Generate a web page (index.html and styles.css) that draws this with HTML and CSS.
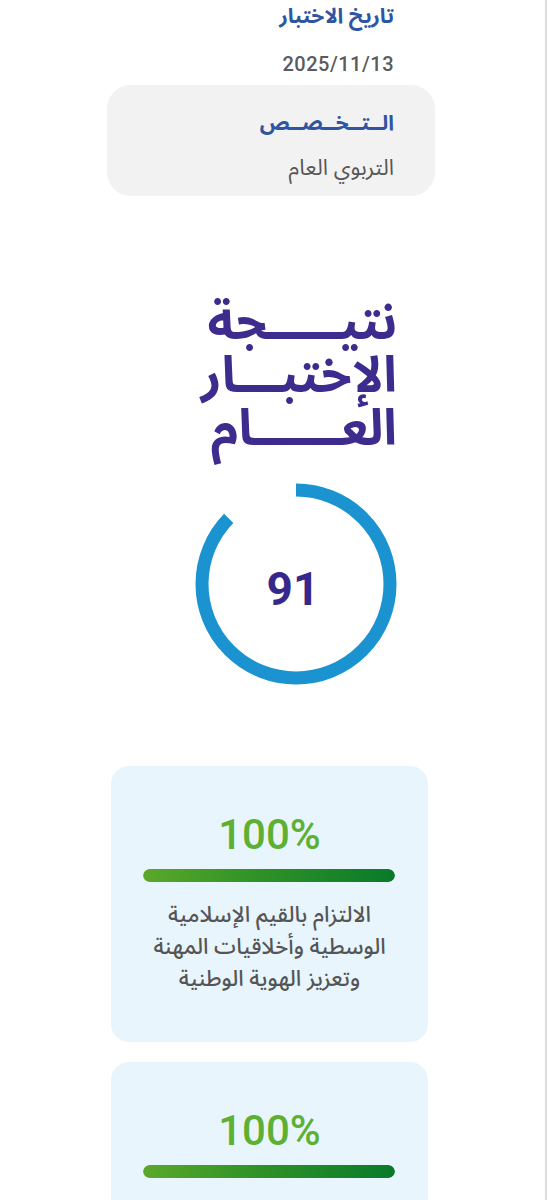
FILE: index.html
```html
<!DOCTYPE html>
<html lang="ar" dir="rtl">
  <head>
    <meta charset="UTF-8" />
    <meta name="viewport" content="width=device-width, initial-scale=1.0" />
    <title>نتيجة الإختبار</title>
    <link rel="stylesheet" href="styles.css">
  </head>
  <body>
    <div class="page">
      <div class="content">
        <div class="info">
          <div class="label">تاريخ الاختبار</div>
          <div class="date">2025/11/13</div>
        </div>

        <div class="specialty">
          <div class="label">الــتــخــصــص</div>
          <div class="value">التربوي العام</div>
        </div>

        <h1 class="title">
          <span>نتيـــــجة</span>
          <span>الإختبـــار</span>
          <span>العــــــام</span>
        </h1>

        <div class="score">
          <svg width="204" height="204" viewBox="0 0 204 204">
            <circle cx="102" cy="102" r="94" fill="none" stroke="#1b93d0" stroke-width="13"
              pathLength="100" stroke-dasharray="87.3 100" transform="rotate(-90 102 102)" />
          </svg>
          <div class="score-number">91</div>
        </div>

        <div class="card">
          <div class="percent">100%</div>
          <div class="bar"><div class="bar-fill" style="width: 100%"></div></div>
          <p class="card-text">الالتزام بالقيم الإسلامية<br />الوسطية وأخلاقيات المهنة<br />وتعزيز الهوية الوطنية</p>
        </div>

        <div class="card">
          <div class="percent">100%</div>
          <div class="bar"><div class="bar-fill" style="width: 100%"></div></div>
          <p class="card-text">الكفايات التربوية<br />والتخطيط للتعليم</p>
        </div>
      </div>
    </div>
  </body>
</html>
```

FILE: styles.css
```css
body {
  margin: 0;
  background: #fff;
  font-family: "Noto Sans Arabic", "DejaVu Sans", sans-serif;
}
.page {
  width: 545px;
  min-height: 1200px;
  margin-right: 1px;
  border-right: 2px solid #dcdcdc;
  background: #fff;
}
.content {
  width: 328px;
  margin-right: 110px;
}
.info {
  padding: 2px 41px 0 0;
}
.label {
  color: #2f55a2;
  font-size: 21px;
  font-weight: bold;
  line-height: 28px;
}
.date {
  margin-top: 20px;
  color: #5b5b5b;
  font-family: Roboto, sans-serif;
  font-weight: 500;
  font-size: 20px;
  letter-spacing: 0.5px;
  line-height: 28px;
  direction: ltr;
  text-align: right;
}
.specialty {
  margin-top: 7px;
  background: #f2f2f2;
  border-radius: 24px;
  padding: 24px 41px 8px 0;
  height: 79px;
}
.value {
  margin-top: 17px;
  color: #575757;
  font-size: 22px;
  line-height: 28px;
}
.title {
  margin: 101px 38px 0 0;
  color: #3d2b8e;
  font-size: 50px;
  font-weight: bold;
  line-height: 53px;
  width: 190px;
}
.title span {
  display: block;
}
.score {
  position: relative;
  width: 204px;
  margin: 26px 37px 0 0;
}
.score svg {
  display: block;
}
.score-number {
  position: absolute;
  top: 0;
  left: 0;
  right: 0;
  bottom: 0;
  display: flex;
  align-items: center;
  justify-content: center;
  padding: 10px 6px 0 0;
  color: #35288a;
  font-family: Roboto, sans-serif;
  font-weight: bold;
  font-size: 46px;
}
.card {
  margin: 80px 7px 0 4px;
  background: #e8f5fd;
  border-radius: 18px;
  padding: 44px 20px 47px 20px;
  text-align: center;
}
.card + .card {
  margin-top: 20px;
}
.percent {
  color: #5eb033;
  font-family: Roboto, sans-serif;
  font-weight: 500;
  font-size: 42px;
  line-height: 50px;
}
.bar {
  margin: 9px 13px 0 12px;
  height: 13px;
  border-radius: 7px;
  background: #d5e9d0;
  overflow: hidden;
}
.bar-fill {
  height: 100%;
  border-radius: 7px;
  background: linear-gradient(to left, #097a2a, #2f9227 55%, #5ba82a);
}
.card-text {
  margin: 17px 0 0;
  color: #555;
  font-size: 22px;
  font-weight: 500;
  line-height: 32px;
}
```
